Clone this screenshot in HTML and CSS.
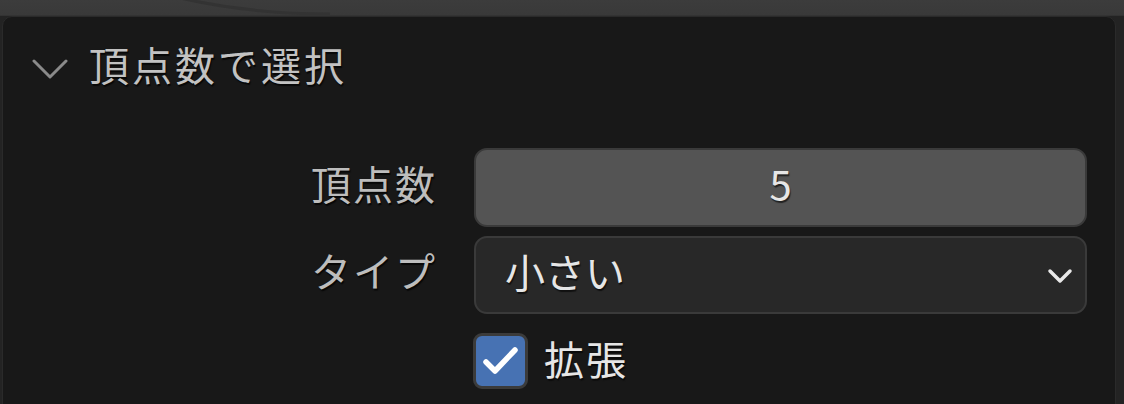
FILE: index.html
```html
<!DOCTYPE html>
<html lang="ja">
<head>
    <meta charset="UTF-8">
    <meta name="viewport" content="width=device-width, initial-scale=1.0">
    <title>頂点数で選択</title>
    <link rel="stylesheet" href="styles.css">
</head>
<body>
    <div class="topbar">
        <svg class="arc" width="600" height="15" viewBox="0 0 600 15">
            <path d="M180 -2 Q 250 14 330 14" fill="none" stroke="#333" stroke-width="3"/>
        </svg>
    </div>
    <div class="area">
        <div class="panel">
            <div class="panel-header">
                <svg class="chev" width="36" height="20" viewBox="0 0 36 20">
                    <path d="M2 2 L18 18 L34 2" fill="none" stroke="#8a8a8a" stroke-width="3" stroke-linecap="round" stroke-linejoin="round"/>
                </svg>
                <span class="title">頂点数で選択</span>
            </div>

            <div class="props">
                <div class="label">頂点数</div>
                <div class="field number">5</div>

                <div class="label">タイプ</div>
                <div class="field menu">
                    <span>小さい</span>
                    <svg width="26" height="17" viewBox="0 0 26 17">
                        <path d="M3 3 L13 13 L23 3" fill="none" stroke="#e8e8e8" stroke-width="3.5" stroke-linecap="round" stroke-linejoin="round"/>
                    </svg>
                </div>

                <div></div>
                <div class="check-row">
                    <span class="checkbox">
                        <svg width="40" height="36" viewBox="0 0 40 36">
                            <path d="M5 19 L14 28 L34 7" fill="none" stroke="#fff" stroke-width="5.5" stroke-linecap="round" stroke-linejoin="round"/>
                        </svg>
                    </span>
                    <span class="check-label">拡張</span>
                </div>
            </div>
        </div>
        <div class="side"></div>
    </div>
</body>
</html>
```

FILE: styles.css
```css
body {
    margin: 0;
    width: 1124px;
    height: 404px;
    overflow: hidden;
    background-color: #3a3a3a;
    font-family: "Noto Sans CJK JP", "Noto Sans", sans-serif;
}
.topbar {
    height: 15px;
    background: linear-gradient(#3c3c3c, #393939);
    border-bottom: 1px solid #333;
    position: relative;
}
.arc {
    position: absolute;
    left: 0;
    top: 0;
}
.area {
    display: flex;
    height: 388px;
    background-color: #232323;
}
.panel {
    margin-left: 2px;
    width: 1112px;
    height: 400px;
    background-color: #181818;
    border: 1px solid #2a2a2a;
    border-radius: 10px 10px 0 0;
}
.side {
    flex: 1;
}
.panel-header {
    display: flex;
    align-items: center;
    height: 102px;
    padding-left: 29px;
}
.chev {
    margin-right: 21px;
    margin-top: 2px;
}
.title {
    font-size: 40px;
    color: #c2c2c2;
    text-shadow: 1px 2px 1px rgba(0,0,0,0.7);
    letter-spacing: 3px;
    padding-bottom: 8px;
}
.props {
    display: grid;
    grid-template-columns: 434px 613px;
    column-gap: 37px;
    row-gap: 9px;
    margin-top: 29px;
}
.label {
    font-size: 40px;
    color: #bdbdbd;
    text-shadow: 1px 2px 1px rgba(0,0,0,0.7);
    display: flex;
    align-items: center;
    justify-content: flex-end;
    letter-spacing: 2px;
    padding-bottom: 10px;
}
.field {
    box-sizing: border-box;
    height: 79px;
    border: 2px solid #3a3a3a;
    border-radius: 13px;
    font-size: 40px;
    color: #e6e6e6;
    text-shadow: 1px 2px 1px rgba(0,0,0,0.6);
    display: flex;
    align-items: center;
}
.number {
    background-color: #545454;
    justify-content: center;
    padding-bottom: 10px;
}
.menu {
    height: 78px;
    background-color: #282828;
    justify-content: space-between;
    padding: 0 12px 8px 29px;
}
.menu svg {
    margin-top: 10px;
}
.check-row {
    display: flex;
    align-items: center;
    margin-top: 10px;
    height: 56px;
}
.checkbox {
    box-sizing: border-box;
    width: 55px;
    height: 56px;
    background-color: #4772b3;
    border: 3px solid #3b3b3b;
    border-radius: 9px;
    display: flex;
    align-items: center;
    justify-content: center;
    margin-left: -1px;
}
.check-label {
    margin-left: 16px;
    font-size: 40px;
    color: #e6e6e6;
    text-shadow: 1px 2px 1px rgba(0,0,0,0.6);
    letter-spacing: 2px;
    padding-bottom: 6px;
}
```
